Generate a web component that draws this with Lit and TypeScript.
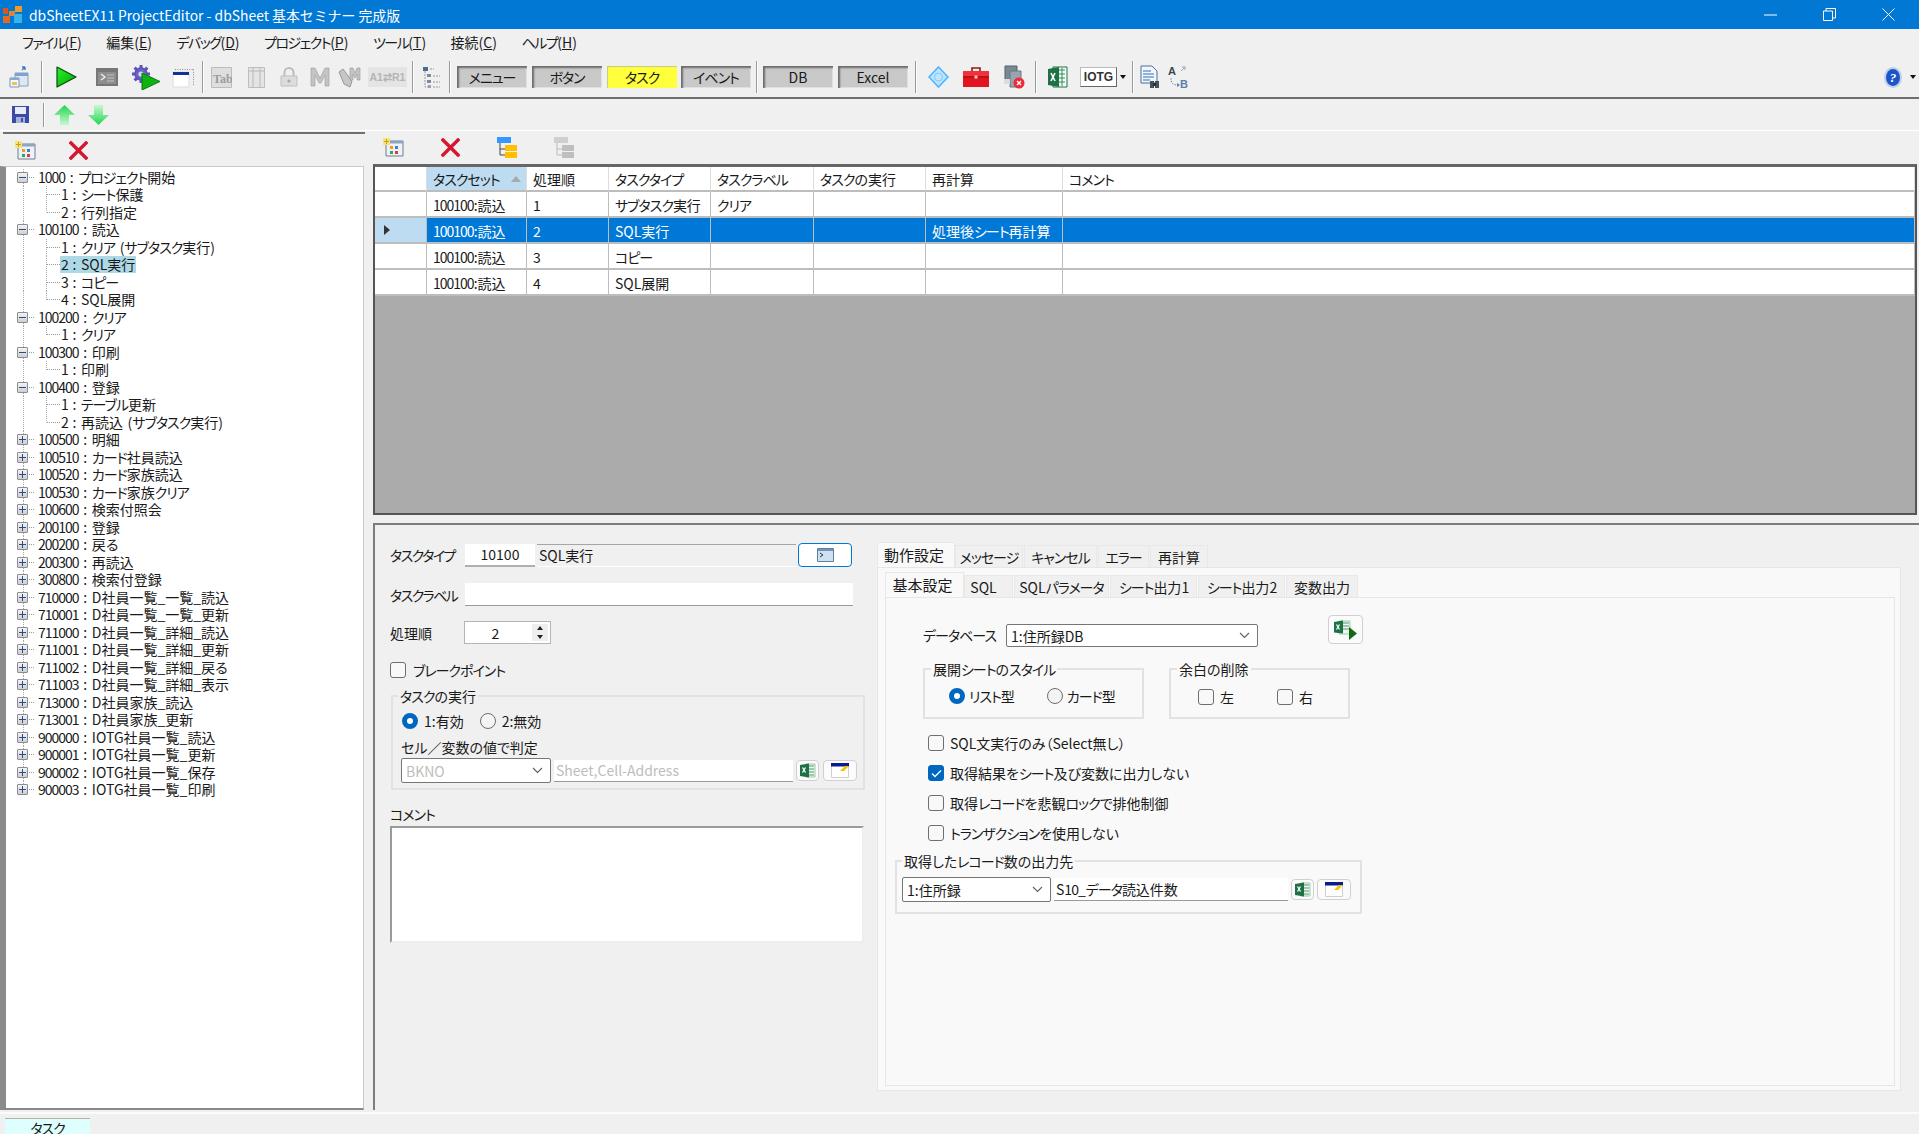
import { LitElement, html, css } from "lit";
import { customElement } from "lit/decorators.js";

const t = (s: string) =>
  s.split(/(\d+|[\u30a0-\u30ff]+)/).map((p, i) =>
    i % 2 ? html`<span class=${/\d/.test(p) ? "d" : "k"}>${p}</span>` : p);

/* ---------- toolbar icons ---------- */
const icons: Record<string, () => any> = {
  deploy: () => html`<svg width="22" height="24" viewBox="0 0 22 24"><path d="M7 8h13v13H7z" fill="#dfe8f2" stroke="#8aa0bc"/><path d="M7 8h13v3H7z" fill="#7fa3cf"/><path d="M2 13h9v9H2z" fill="#f3f6fa" stroke="#7d97b6"/><path d="M2 13h9v2H2z" fill="#88a9d0"/><path d="M4 17h5v3H4z" fill="#e7c65c"/><path d="M14 5l3-3m0 0h-3m3 0v3" fill="none" stroke="#3f78c0" stroke-width="1.4"/></svg>`,
  play: () => html`<svg width="22" height="22" viewBox="0 0 22 22"><defs><linearGradient id="g1" x1="0" y1="0" x2="1" y2="1"><stop offset="0" stop-color="#2bf02b"/><stop offset="1" stop-color="#00a800"/></linearGradient></defs><path d="M2 1l19 10L2 21z" fill="url(#g1)" stroke="#0a4a14" stroke-width="1.2" stroke-linejoin="round"/></svg>`,
  console: () => html`<svg width="22" height="18" viewBox="0 0 22 18"><path d="M0 0h22v18H0z" fill="#777"/><path d="M2 4h18v12H2z" fill="#8e8e8e"/><path d="M5 6l4 3-4 3" fill="none" stroke="#eee" stroke-width="1.4"/><path d="M11 7h7M11 10h7M11 13h7" stroke="#c4c4c4"/></svg>`,
  gearplay: () => html`<svg width="30" height="25" viewBox="0 0 30 25"><circle cx="10" cy="9" r="6.2" fill="#6a63c9" stroke="#3f3a95"/><g stroke="#5a54bb" stroke-width="3"><path d="M10 0v4M10 14v4M1 9h4M15 9h4M3.6 2.6l3 3M13.4 12.4l3 3M16.4 2.6l-3 3M6.6 12.4l-3 3"/></g><circle cx="10" cy="9" r="2.6" fill="#d8d8f5"/><path d="M11 8l18 8.5L11 25z" fill="#0fb30f" stroke="#0a7a12" stroke-linejoin="round"/></svg>`,
  win: () => html`<svg width="22" height="22" viewBox="0 0 22 22"><path d="M3 3.5h18.5M21.500 3.5v16" stroke="#888" stroke-dasharray="1 1.4" fill="none"/><path d="M1 6h16v15H1z" fill="#fff" stroke="#ddd"/><path d="M1 6h16v3H1z" fill="#10329a"/></svg>`,
  tab: () => html`<svg width="21" height="21" viewBox="0 0 21 21"><path d="M.5.5h20v20H.5z" fill="#dedede" stroke="#bcbcbc"/><text x="2" y="16" font-family="Liberation Serif" font-size="12" font-weight="700" fill="#9c9c9c">Tab</text></svg>`,
  cols: () => html`<svg width="17" height="21" viewBox="0 0 17 21"><path d="M.5.5h16v20H.5z" fill="#e4e4e4" stroke="#bdbdbd"/><path d="M5 1v19M12 1v19M1 4h15" stroke="#b8b8b8"/></svg>`,
  lock: () => html`<svg width="18" height="20" viewBox="0 0 18 20"><path d="M4.5 9V5.5a4.5 4.5 0 019 0V9" fill="none" stroke="#bdbdbd" stroke-width="2"/><path d="M1 9h16v10H1z" fill="#dcdcdc" stroke="#c0c0c0"/><circle cx="9" cy="14" r="1.6" fill="#a8a8a8"/></svg>`,
  m: () => html`<svg width="20" height="20" viewBox="0 0 20 20"><path d="M1 19V1h4l5 10 5-10h4v18h-4V8l-4 8h-2L5 8v11z" fill="#c4c4c4" stroke="#9c9c9c" stroke-width=".6"/></svg>`,
  mm: () => html`<svg width="25" height="23" viewBox="0 0 25 23"><path d="M1 6l4-3 9 12-2 6-6-3z" fill="#c6c6c6" stroke="#999"/><path d="M12 14V2h3l2 5 2-5h3v12h-3V8l-2 4-2-4v6z" fill="#c4c4c4" stroke="#999" stroke-width=".6"/></svg>`,
  a1: () => html`<svg width="39" height="20" viewBox="0 0 39 20"><path d="M0 0h39v20H0z" fill="#e4e4e4"/><text x="1.500" y="14" font-family="Liberation Sans" font-size="10.500" font-weight="700" fill="#b4b4b4">A1⇄R1</text></svg>`,
  list: () => html`<svg width="20" height="23" viewBox="0 0 20 23"><path d="M2 1h5v4H2z" fill="#4d6a96"/><path d="M6 8h4v3H6zM6 14h4v3H6z" fill="#7a8aa0"/><path d="M9 3h4M12 10h7M12 16h7M12 21h7M4 5v16h3" stroke="#999" stroke-dasharray="2 1" fill="none"/><path d="M7 19h3v3H7z" fill="#a0a0a0"/></svg>`,
  diamond: () => html`<svg width="21" height="22" viewBox="0 0 21 22"><path d="M10.5 1L20 11l-9.500 10L1 11z" fill="#bfe4ff" stroke="#4db4ff" stroke-width="1.6"/><circle cx="10.500" cy="11" r="4" fill="none" stroke="#7cc8ff"/></svg>`,
  toolbox: () => html`<svg width="26" height="22" viewBox="0 0 26 22"><path d="M9 5V2h8v3" fill="none" stroke="#8c1a1a" stroke-width="1.6"/><path d="M0 5h26v16H0z" fill="#e2141d"/><path d="M0 5h26v5H0z" fill="#f2323a"/><path d="M0 11h26" stroke="#8f1016"/><path d="M11.500 9.500h3v3h-3z" fill="#f8c0c0"/></svg>`,
  docx: () => html`<svg width="22" height="24" viewBox="0 0 22 24"><path d="M2 1h12v14H2z" fill="#7a8794" stroke="#55606c"/><path d="M7 6h11v16H7z" fill="#9aa4b0" stroke="#6c7682"/><path d="M1 14h6v5H1z" fill="#d6dce4"/><circle cx="16" cy="18" r="5.500" fill="#ea2b3a"/><path d="M14 16l4 4m0-4l-4 4" stroke="#fff" stroke-width="1.3"/></svg>`,
  excel: () => html`<svg width="20" height="22" viewBox="0 0 20 22"><path d="M5 1h14v20H5z" fill="#f5fbf6" stroke="#1e7145"/><path d="M11 4h6M11 8h6M11 12h6M11 16h6M14 2v18" stroke="#2f8f5b"/><path d="M0 3l11-2v20L0 19z" fill="#1e7145"/><path d="M3 7l4 8M7 7l-4 8" stroke="#fff" stroke-width="1.6"/></svg>`,
  iotg: () => html`<span class="iotg">IOTG</span>`,
  docbin: () => html`<svg width="20" height="24" viewBox="0 0 20 24"><path d="M1 1h11l5 5v12H1z" fill="#f2f6fc" stroke="#4f6f96"/><path d="M3 6h8M3 9h11M3 12h11M3 15h7" stroke="#2e6ec2"/><path d="M10 16h4v7h-4zM15 16h4v7h-4z" fill="#45505c"/><path d="M13 18h3v3h-3z" fill="#2a3038"/></svg>`,
  ab: () => html`<svg width="20" height="24" viewBox="0 0 20 24"><text x="0" y="10" font-family="Liberation Sans" font-size="11" font-weight="700" fill="#3d4653">A</text><text x="12" y="23" font-family="Liberation Sans" font-size="11" font-weight="700" fill="#5d7fa8">B</text><path d="M3 13c0 5 2 7 6 7" fill="none" stroke="#6f8bb0" stroke-dasharray="1.500 1.200"/><path d="M9 18l3 2-3 2z" fill="#4f7fc0"/><path d="M13 6l4-4m0 0h-3m3 0v3" fill="none" stroke="#8aa6cc"/></svg>`,
  help: () => html`<svg width="18" height="21" viewBox="0 0 18 21"><ellipse cx="9" cy="10.500" rx="9" ry="10.500" fill="#bcd0ec"/><ellipse cx="9" cy="10.500" rx="7" ry="8.500" fill="#1d55c8"/><text x="9" y="15" text-anchor="middle" font-family="Liberation Serif" font-size="13" font-style="italic" font-weight="700" fill="#fff">?</text></svg>`,
  save: () => html`<svg width="17" height="17" viewBox="0 0 17 17"><path d="M0 0h17v17H0z" fill="#3a4aa8"/><path d="M3 1h11v7H3z" fill="#e8ecf8"/><path d="M4 11h9v6H4z" fill="#aab2d6"/><path d="M9 12h2v4H9z" fill="#3a4aa8"/></svg>`,
  up: () => html`<svg width="21" height="20" viewBox="0 0 21 20"><defs><linearGradient id="g2" x1="0" y1="0" x2="0" y2="1"><stop offset="0" stop-color="#1ed84c"/><stop offset="1" stop-color="#c9f7d2"/></linearGradient></defs><path d="M10.500 0L21 10h-6v10H6V10H0z" fill="url(#g2)"/></svg>`,
  down: () => html`<svg width="21" height="20" viewBox="0 0 21 20"><defs><linearGradient id="g3" x1="0" y1="1" x2="0" y2="0"><stop offset="0" stop-color="#1ed84c"/><stop offset="1" stop-color="#c9f7d2"/></linearGradient></defs><path d="M10.500 20L0 10h6V0h9v10h6z" fill="url(#g3)"/></svg>`,
  add: () => html`<svg width="21" height="19" viewBox="0 0 21 19"><path d="M3 3h17v15H3z" fill="#eef1f5" stroke="#6f7f95"/><path d="M3 3h17v2.500H3z" fill="#8ea4c0"/><path d="M7 8h3v3H7z" fill="#e6a020"/><path d="M12 8h3v3h-3z" fill="#3f80d0"/><path d="M7 13h3v3H7z" fill="#2eaa50"/><path d="M12 13h3v3h-3z" fill="#d84040"/><path d="M0 0h7v7H0z" fill="#f8e27a"/><path d="M1 3.500h5M3.500 1v5" stroke="#caa020"/></svg>`,
  del: () => html`<svg width="19" height="19" viewBox="0 0 19 19"><path d="M2 2l15 15M17 2L2 17" stroke="#d4182f" stroke-width="3.400" stroke-linecap="square"/></svg>`,
  flow: () => html`<svg width="20" height="22" viewBox="0 0 20 22"><path d="M0 0h14v6H0z" fill="#3399ff"/><path d="M3 6v12h6M3 12h6" fill="none" stroke="#445"/><path d="M8 8h12v6H8z" fill="#ffc000"/><path d="M8 15h12v6H8z" fill="#ffc000"/></svg>`,
  flowg: () => html`<svg width="20" height="22" viewBox="0 0 20 22"><path d="M0 0h14v6H0z" fill="#cfcfcf"/><path d="M3 6v12h6M3 12h6" fill="none" stroke="#bbb"/><path d="M8 8h12v6H8z" fill="#bfbfbf"/><path d="M8 15h12v6H8z" fill="#bfbfbf"/></svg>`,
  minicon: () => html`<svg width="17" height="14" viewBox="0 0 17 14"><path d="M.5.5h16v13H.5z" fill="#cfe0f0" stroke="#5f7f9f"/><path d="M1 1h15v2H1z" fill="#6e93bd"/><path d="M3 5l3 2-3 2" fill="none" stroke="#333"/></svg>`,
  xls: () => html`<svg width="16" height="15" viewBox="0 0 16 15"><path d="M6 1h9v13H6z" fill="#eef7f0" stroke="#9cc8ac"/><path d="M9 3h5M9 6h5M9 9h5M9 12h5" stroke="#4a9a6a"/><path d="M0 2l9-1.500v14L0 13z" fill="#1e7145"/><path d="M2.500 4.500l3 5m0-5l-3 5" stroke="#fff" stroke-width="1.300"/></svg>`,
  winy: () => html`<svg width="18" height="15" viewBox="0 0 18 15"><path d="M.5 1h17v13.500H.5z" fill="#fff" stroke="#cfcfcf"/><path d="M0 0h18v3.500H0z" fill="#0a1a90"/><path d="M9 8l5-5h4L13 8z" fill="#f4c400"/></svg>`,
  xplay: () => html`<svg width="24" height="20" viewBox="0 0 24 20"><path d="M5 1h11v13H5z" fill="#eef7f0" stroke="#9cc8ac"/><path d="M9 3h6M9 6h6M9 9h6" stroke="#4a9a6a"/><path d="M0 2l9-1.500v13L0 12.500z" fill="#1e7145"/><path d="M2.500 4.500l3 5m0-5l-3 5" stroke="#fff" stroke-width="1.200"/><path d="M15 7l8 6.500-8 6.500z" fill="#126b12"/></svg>`,
};
const ic = (n: string) => icons[n]();

/* ---------- data ---------- */
type TB = { gap: number; kind: string; v?: string; cls?: string };
const bar: TB[] = [
  { gap: 8, kind: "i", v: "deploy" },
  { gap: 11, kind: "s" },
  { gap: 13, kind: "i", v: "play" },
  { gap: 19, kind: "i", v: "console" },
  { gap: 13, kind: "i", v: "gearplay" },
  { gap: 11, kind: "i", v: "win" },
  { gap: 8, kind: "s" },
  { gap: 8, kind: "i", v: "tab" },
  { gap: 16, kind: "i", v: "cols" },
  { gap: 15, kind: "i", v: "lock" },
  { gap: 12, kind: "i", v: "m" },
  { gap: 8, kind: "i", v: "mm" },
  { gap: 5, kind: "i", v: "a1" },
  { gap: 5, kind: "s" },
  { gap: 8, kind: "i", v: "list" },
  { gap: 8, kind: "s" },
  { gap: 7, kind: "b", v: "メニュー" },
  { gap: 5, kind: "b", v: "ボタン" },
  { gap: 5, kind: "b", v: "タスク", cls: "on" },
  { gap: 4, kind: "b", v: "イベント" },
  { gap: 5, kind: "s" },
  { gap: 6, kind: "b", v: "DB" },
  { gap: 5, kind: "b", v: "Excel" },
  { gap: 7, kind: "s" },
  { gap: 12, kind: "i", v: "diamond" },
  { gap: 14, kind: "i", v: "toolbox" },
  { gap: 14, kind: "i", v: "docx" },
  { gap: 10, kind: "s" },
  { gap: 12, kind: "i", v: "excel" },
  { gap: 12, kind: "i", v: "iotg" },
  { gap: 3, kind: "a" },
  { gap: 6, kind: "s" },
  { gap: 7, kind: "i", v: "docbin" },
  { gap: 8, kind: "i", v: "ab" },
];

const menus: [string, string][] = [
  ["ファイル", "F"], ["編集", "E"], ["デバッグ", "D"], ["プロジェクト", "P"],
  ["ツール", "T"], ["接続", "C"], ["ヘルプ", "H"],
];

type Node = { code: string; name: string; kids?: string[] };
const tree: Node[] = [
  { code: "1000", name: "プロジェクト開始", kids: ["1 : シート保護", "2 : 行列指定"] },
  { code: "100100", name: "読込", kids: ["1 : クリア (サブタスク実行)", "2 : SQL実行", "3 : コピー", "4 : SQL展開"] },
  { code: "100200", name: "クリア", kids: ["1 : クリア"] },
  { code: "100300", name: "印刷", kids: ["1 : 印刷"] },
  { code: "100400", name: "登録", kids: ["1 : テーブル更新", "2 : 再読込 (サブタスク実行)"] },
  ...[
    ["100500", "明細"], ["100510", "カード社員読込"], ["100520", "カード家族読込"], ["100530", "カード家族クリア"],
    ["100600", "検索付照会"], ["200100", "登録"], ["200200", "戻る"], ["200300", "再読込"], ["300800", "検索付登録"],
    ["710000", "D社員一覧_一覧_読込"], ["710001", "D社員一覧_一覧_更新"], ["711000", "D社員一覧_詳細_読込"],
    ["711001", "D社員一覧_詳細_更新"], ["711002", "D社員一覧_詳細_戻る"], ["711003", "D社員一覧_詳細_表示"],
    ["713000", "D社員家族_読込"], ["713001", "D社員家族_更新"], ["900000", "IOTG社員一覧_読込"],
    ["900001", "IOTG社員一覧_更新"], ["900002", "IOTG社員一覧_保存"], ["900003", "IOTG社員一覧_印刷"],
  ].map(([code, name]) => ({ code, name })),
];

const heads = ["タスクセット", "処理順", "タスクタイプ", "タスクラベル", "タスクの実行", "再計算", "コメント"];
const rows = [
  ["100100:読込", "1", "サブタスク実行", "クリア", "", "", ""],
  ["100100:読込", "2", "SQL実行", "", "", "処理後シート再計算", ""],
  ["100100:読込", "3", "コピー", "", "", "", ""],
  ["100100:読込", "4", "SQL展開", "", "", "", ""],
];

const chev = html`<svg width="11" height="7" viewBox="0 0 11 7"><path d="M1 1l4.500 4.500L10 1" fill="none" stroke="#606060" stroke-width="1.100"/></svg>`;
const tick = html`<svg width="11" height="9" viewBox="0 0 11 9"><path d="M1 4.500l3 3 6-6" fill="none" stroke="#fff" stroke-width="1.300"/></svg>`;

@customElement("app-root")
export class AppRoot extends LitElement {
  static styles = css`
    :host {
      display: block; width: 1919px; height: 1134px; overflow: hidden; background: #f0f0f0; color: #1a1a1a;
      font: 14px/18px "Noto Sans CJK JP", "Noto Sans", sans-serif; font-feature-settings: "palt";
    }
    * { box-sizing: border-box; }
    svg { display: block; flex: none; }
    .d { letter-spacing: -1px; }
    .k { letter-spacing: -1px; }

    .title { height: 29px; background: #0078d4; color: #fff; display: flex; align-items: center; padding-left: 3px; font-size: 13.900px; font-feature-settings: normal; }
    .title .txt { margin-left: 6px; }
    .ctl { margin-left: auto; display: flex; align-items: center; padding-right: 24px; gap: 46px; }

    .menu { height: 31px; display: flex; align-items: flex-start; padding: 4px 0 0 22px; gap: 24.500px; }
    .menu .k { letter-spacing: -1.500px; }
    .menu u { text-underline-offset: 1px; }

    .tb { height: 39px; border-bottom: 2px solid #6e6e6e; display: flex; align-items: center; padding-bottom: 3px; }
    .sep { width: 1px; height: 32px; background: #9a9a9a; box-shadow: 1px 0 0 #fff; flex: none; }
    .mode { width: 70px; height: 22px; background: #c9c9c9; display: flex; align-items: center; justify-content: center; box-shadow: inset 2px 2px 2px #6b6b6b, inset -1px -1px 0 #e0e0e0; flex: none; }
    .mode.on { background: #ffff3c; box-shadow: inset 1px 1px 1px #c7c78a; }
    .iotg { display: flex; width: 37px; height: 20px; background: #fff; border: 1px solid #bbb; border-right-color: #666; border-bottom-color: #666; align-items: center; justify-content: center; font: 700 12px "Liberation Sans", sans-serif; color: #333; }
    .arrow { width: 0; height: 0; border: 3.500px solid transparent; border-top: 4px solid #111; border-bottom: 0; flex: none; }
    .helpbox { margin-left: auto; display: flex; align-items: center; gap: 8px; padding-right: 3px; }

    .tb2 { height: 32px; border-bottom: 1px solid #fff; display: flex; align-items: center; padding-left: 12px; }
    .tb2 .sep { height: 24px; margin: 0 10px 0 14px; }
    .tb2 .dn { margin-left: 13px; }

    .main { height: 981px; display: flex; }
    .left { width: 373px; display: flex; flex-direction: column; padding-bottom: 2px; }
    .ptb { height: 34px; display: flex; align-items: center; border-top: 2px solid #707070; margin: 1px 8px 0 3px; padding-left: 12px; gap: 33px; flex: none; }
    .treebox { flex: 1; margin-right: 9px; background: #fff; border: 1px solid #c8c8c8; border-left: 6px solid #8b8b8b; border-bottom: 2px solid #888; padding-top: 1.500px; }
    .tr { height: 17.500px; display: flex; align-items: center; line-height: 17px; white-space: nowrap; padding-left: 11px; word-spacing: 1.500px;
      background: repeating-linear-gradient(#a8a8a8 0 1px, transparent 1px 2px) 17px 0 / 1px 100% no-repeat; }
    .tr.end { background-size: 1px 50%; }
    .exp { width: 11px; height: 11px; border: 1px solid #8c8c8c; border-radius: 1px; background: linear-gradient(#f4f4f4, #cfcfcf); display: flex; align-items: center; justify-content: center; position: relative; flex: none; }
    .exp::before { content: ""; width: 7px; height: 1px; background: #2a4a8c; }
    .exp.plus::after { content: ""; position: absolute; left: 4px; top: 1px; width: 1px; height: 7px; background: #2a4a8c; }
    .dash { width: 5px; border-top: 1px dotted #999; margin: 0 3px 0 1px; flex: none; }
    .tr.kid { padding-left: 41px; background-image: repeating-linear-gradient(#a8a8a8 0 1px, transparent 1px 2px), repeating-linear-gradient(#a8a8a8 0 1px, transparent 1px 2px); background-position: 17px 0, 40px 0; background-size: 1px 100%, 1px 100%; background-repeat: no-repeat; }
    .tr.kid.last { background-size: 1px 100%, 1px 50%; }
    .tr.kid .dash { width: 13px; margin: 0; }
    .lbl { padding: 0 1px; height: 17px; }
    .lbl.sel { background: #add8e6; }

    .right { flex: 1; display: flex; flex-direction: column; min-width: 0; padding-bottom: 2px; }
    .rtb { height: 33px; display: flex; align-items: center; padding-left: 10px; flex: none; }
    .rtb .a, .rtb .b { margin-left: 37px; }
    .gridbox { height: 351px; flex: none; margin-right: 2px; border: 2px solid #555; border-top: 3px solid #666; background: #ababab; }
    .grid { display: grid; grid-template-columns: 52px 100px 82px 102px 103px 112px 137px 1fr; }
    .c { background: #fff; padding: 1px 0 0 6px; display: flex; align-items: center; border-right: 1px solid #bdbdbd; border-bottom: 2px solid #bdbdbd; height: 26px; white-space: nowrap; }
    .c.h { height: 25px; padding-top: 0; border-right: 1px solid #dcdcdc; }
    .c.h.act { background: #bddcf2; justify-content: space-between; padding-right: 5px; }
    .c.s { background: #0078d7; color: #fff; }
    .c.rh { padding: 0 0 0 9px; }
    .c.rh.s { background: #bddcf2; }
    .rt { width: 0; height: 0; border: 5px solid transparent; border-left: 6px solid #333; border-right: 0; }
    .st { width: 0; height: 0; border: 5.500px solid transparent; border-bottom: 6px solid #a8a8a8; border-top: 0; }

    .bottom { flex: 1; margin-top: 8px; border-top: 2px solid #7c7c7c; border-left: 2px solid #7c7c7c; display: flex; min-height: 0; }
    .form { width: 502px; padding: 18px 0 0 15px; flex: none; }
    .row { display: flex; align-items: center; }
    .f-l { width: 75px; flex: none; white-space: nowrap; }
    .f-l .k { letter-spacing: -1.600px; }
    .field { height: 23px; background: #fff; border-bottom: 1px solid #9a9a9a; display: flex; align-items: center; padding: 0 2px; white-space: nowrap; flex: none; }
    .ro { background: #f0f0f0; border-top: 1px solid #a5a5a5; border-bottom: 1px solid #fff; }
    .btn { display: flex; align-items: center; justify-content: center; background: #fbfbfb; border: 1px solid #d0d0d0; border-radius: 4px; flex: none; }
    .btn.pri { width: 54px; height: 24px; margin-left: 2px; background: #fff; border: 1.500px solid #0078d4; }
    .spin { width: 87px; height: 23px; margin-left: -1px; background: #fff; border: 1px solid #b4b4b4; display: flex; align-items: center; justify-content: flex-end; }
    .spin .v { flex: 1; text-align: center; padding-right: 6px; }
    .spin .ud { width: 16px; height: 17px; margin-right: 2px; background: #eee; display: flex; flex-direction: column; align-items: center; justify-content: space-around; }
    .uu { border: 3.500px solid transparent; border-bottom: 4px solid #222; border-top: 0; width: 0; height: 0; }
    .dd { border: 3.500px solid transparent; border-top: 4px solid #222; border-bottom: 0; width: 0; height: 0; }

    .cb { width: 16px; height: 16px; border: 1px solid #6e6e6e; border-radius: 3px; background: #f8f8f8; flex: none; display: flex; align-items: center; justify-content: center; }
    .cb.on { background: #0067c0; border-color: #0067c0; }
    .rd { width: 16px; height: 16px; border: 1px solid #6e6e6e; border-radius: 50%; background: #f4f4f4; flex: none; }
    .rd.on { border: 5px solid #0067c0; background: #fff; }

    fieldset { margin: 0; min-width: 0; border: 2px solid #e2e2e2; flex: none; }
    legend { padding: 0 2px; line-height: 18px; height: 18px; white-space: nowrap; }
    .combo { background: #fff; border: 1px solid #767676; border-radius: 2px; display: flex; align-items: center; justify-content: space-between; padding: 0 7px 0 4px; flex: none; white-space: nowrap; }
    .mute { color: #bdbdbd; }

    .fs1 { width: 474px; height: 103px; margin: 8px 0 0 1px; padding: 0 7px 0 8px; }
    .fs1 legend { margin-left: -3px; }
    .comment { margin: 15px 0 3px; }
    .ta { width: 474px; height: 117px; background: #fff; border: 2px solid #9a9a9a; border-right-color: #eee; border-bottom-color: #eee; }

    .tabs { flex: none; width: 1024px; margin-top: 17px; display: flex; flex-direction: column; height: 549px; }
    .strip { display: flex; align-items: flex-end; flex: none; }
    .tabx { height: 22px; background: #f0f0f0; border: 1px solid #e8e8e8; border-bottom: 0; display: flex; align-items: center; justify-content: center; flex: none; margin-right: 1px; white-space: nowrap; }
    .tabx.on { height: 25px; background: #f9f9f9; margin-right: 0; font-size: 15px; padding-right: 4px; }
    .panel { flex: 1; background: #f9f9f9; border: 1px solid #e6e6e6; padding: 4px 5px 4px 7px; display: flex; flex-direction: column; min-height: 0; }
    .panel2 { flex: 1; border: 1px solid #e6e6e6; }
    .inner { padding: 17px 0 0 37px; }
    .dbrow { display: flex; align-items: flex-start; }
    .dbrow .l { width: 83px; margin-top: 9px; line-height: 23px; flex: none; }
    .dbrow .combo { width: 252px; height: 23px; margin-top: 9px; }
    .dbrow .btn { width: 35px; height: 29px; margin-left: 70px; }
    .grp { display: flex; gap: 25px; margin-top: 13px; }
    .g1 { width: 221px; height: 59px; padding: 0 0 0 24px; }
    .g2 { width: 181px; height: 59px; padding: 0 0 0 27px; }
    .g1 legend { margin-left: -18px; }
    .g2 legend { margin-left: -21px; }
    .fr { display: flex; align-items: center; height: 24px; }
    .lab { margin-left: 6px; white-space: nowrap; }
    .checks { margin: 9px 0 0 5px; }
    .ck { height: 30px; display: flex; align-items: center; }
    .g3 { width: 467px; height: 62px; margin: 4px 0 0 -33px; padding: 0 0 0 5px; }

    .status { height: 22px; border-top: 2px solid #fbfbfb; padding: 4px 0 0 5px; }
    .stab { width: 85px; height: 16px; background: #dfffff; border-top: 1px solid #b5b59c; text-align: center; line-height: 18px; }

    .num { width: 70px; justify-content: center; border-bottom: 2px solid #b0b0b0; }
    .namef { width: 259px; margin-left: 2px; }
    .wide { width: 388px; }
    .r2 { margin-top: 16px; }
    .r3 { margin-top: 15px; }
    .r4 { margin-top: 17px; }
    .r4 .lab { margin-left: 7px; }
    .fr .r-a { margin-right: 16px; }
    .fs1 .fr { height: 26px; margin: 3px 0 0 1px; }
    .hint { margin: 3px 0 0 0; height: 21px; line-height: 20px; }
    .fs1 .c1 { width: 150px; height: 25px; }
    .addr { width: 239px; height: 22px; margin-left: 3px; }
    .bx { width: 23px; height: 21px; margin-left: 3px; }
    .by { width: 34px; height: 21px; margin-left: 4px; }
    .g1 .lab { margin-left: 4px; }
    .rg { margin-left: 32px; }
    .cg { margin-left: 43px; }
    .g3 .c1 { width: 149px; height: 25px; }
    .addr2 { width: 234px; height: 23px; margin-left: 3px; }
    .g3 .by { margin-left: 3px; }
    .g3 .hintrow2 { margin-top: 7px; }
    .g1 .fr { margin-top: 6px; }
    .g2 .fr { margin-top: 7px; }
    .sqltab { padding-right: 10px; }
  `;

  private toolbar() {
    return bar.map((b) => {
      const m = `margin-left:${b.gap}px`;
      if (b.kind === "s") return html`<div class="sep" style=${m}></div>`;
      if (b.kind === "a") return html`<div class="arrow" style=${m}></div>`;
      if (b.kind === "b") return html`<div class="mode ${b.cls ?? ""}" style=${m}>${t(b.v!)}</div>`;
      return html`<div style=${m}>${ic(b.v!)}</div>`;
    });
  }

  private treeRows() {
    const out: any[] = [];
    tree.forEach((n, ni) => {
      const last = ni === tree.length - 1;
      out.push(html`<div class="tr ${last ? "end" : ""}">
        <span class="exp ${n.kids ? "" : "plus"}"></span><span class="dash"></span>
        <span class="lbl">${t(n.code)} : ${t(n.name)}</span></div>`);
      (n.kids ?? []).forEach((k, i) => {
        const isLast = i === n.kids!.length - 1;
        out.push(html`<div class="tr kid ${isLast ? "last" : ""}"><span class="dash"></span>
          <span class="lbl ${k === "2 : SQL実行" ? "sel" : ""}">${t(k)}</span></div>`);
      });
    });
    return out;
  }

  private grid() {
    return html`<div class="grid">
      <div class="c h"></div>
      ${heads.map((h, i) => html`<div class="c h ${i === 0 ? "act" : ""}"><span>${t(h)}</span>${i === 0 ? html`<span class="st"></span>` : ""}</div>`)}
      ${rows.map((r, ri) => html`
        <div class="c rh ${ri === 1 ? "s" : ""}">${ri === 1 ? html`<span class="rt"></span>` : ""}</div>
        ${r.map((v) => html`<div class="c ${ri === 1 ? "s" : ""}"><span>${t(v)}</span></div>`)}`)}
    </div>`;
  }

  private form() {
    return html`<div class="form">
      <div class="row">
        <div class="f-l">${t("タスクタイプ")}</div>
        <div class="field num">10100</div>
        <div class="field ro namef">SQL実行</div>
        <div class="btn pri">${ic("minicon")}</div>
      </div>
      <div class="row r2">
        <div class="f-l">${t("タスクラベル")}</div>
        <div class="field wide"></div>
      </div>
      <div class="row r3">
        <div class="f-l">処理順</div>
        <div class="spin"><span class="v">2</span><div class="ud"><span class="uu"></span><span class="dd"></span></div></div>
      </div>
      <div class="row r4"><span class="cb"></span><span class="lab">${t("ブレークポイント")}</span></div>
      <fieldset class="fs1">
        <legend>${t("タスクの実行")}</legend>
        <div class="fr">
          <span class="rd on"></span><span class="lab r-a">1:有効</span>
          <span class="rd"></span><span class="lab">2:無効</span>
        </div>
        <div class="hint">セル／変数の値で判定</div>
        <div class="row">
          <div class="combo mute c1">BKNO ${chev}</div>
          <div class="field mute addr">Sheet,Cell-Address</div>
          <div class="btn bx">${ic("xls")}</div>
          <div class="btn by">${ic("winy")}</div>
        </div>
      </fieldset>
      <div class="comment">${t("コメント")}</div>
      <div class="ta"></div>
    </div>`;
  }

  private tabs() {
    const outer: [string, number][] = [["動作設定", 78], ["メッセージ", 68], ["キャンセル", 73], ["エラー", 51], ["再計算", 58]];
    const inner: [string, number][] = [["基本設定", 79], ["SQL", 49], ["SQLパラメータ", 95], ["シート出力1", 87], ["シート出力2", 87], ["変数出力", 72]];
    const strip = (a: [string, number][]) => html`<div class="strip">
      ${a.map(([s, w], i) => html`<div class="tabx ${i === 0 ? "on" : ""} ${s === "SQL" ? "sqltab" : ""}" style="width:${w}px"><span>${t(s)}</span></div>`)}</div>`;
    return html`<div class="tabs">
      ${strip(outer)}
      <div class="panel">
        ${strip(inner)}
        <div class="panel2">
          <div class="inner">
            <div class="dbrow">
              <div class="l">${t("データベース")}</div>
              <div class="combo">1:住所録DB ${chev}</div>
              <div class="btn">${ic("xplay")}</div>
            </div>
            <div class="grp">
              <fieldset class="g1"><legend>${t("展開シートのスタイル")}</legend>
                <div class="fr"><span class="rd on"></span><span class="lab">${t("リスト型")}</span><span class="rd rg"></span><span class="lab">${t("カード型")}</span></div>
              </fieldset>
              <fieldset class="g2"><legend>余白の削除</legend>
                <div class="fr"><span class="cb"></span><span class="lab">左</span><span class="cb cg"></span><span class="lab">右</span></div>
              </fieldset>
            </div>
            <div class="checks">
              <div class="ck"><span class="cb"></span><span class="lab">SQL文実行のみ（Select無し）</span></div>
              <div class="ck"><span class="cb on">${tick}</span><span class="lab">${t("取得結果をシート及び変数に出力しない")}</span></div>
              <div class="ck"><span class="cb"></span><span class="lab">${t("取得レコードを悲観ロックで排他制御")}</span></div>
              <div class="ck"><span class="cb"></span><span class="lab">${t("トランザクションを使用しない")}</span></div>
              <fieldset class="g3"><legend>${t("取得したレコード数の出力先")}</legend>
                <div class="row hintrow2">
                  <div class="combo c1">1:住所録 ${chev}</div>
                  <div class="field addr2">${t("S10_データ読込件数")}</div>
                  <div class="btn bx">${ic("xls")}</div>
                  <div class="btn by">${ic("winy")}</div>
                </div>
              </fieldset>
            </div>
          </div>
        </div>
      </div>
    </div>`;
  }

  render() {
    return html`
      <div class="title">
        <svg width="20" height="18" viewBox="0 0 20 18"><path d="M0 2h5v6H0z" fill="#d9561c"/><path d="M6 5h6v5H6z" fill="#e8822a"/><path d="M12 0h7v6h-7z" fill="#f09a2e"/><path d="M0 10h7v7H0z" fill="#e06a20"/><path d="M11 8h8v9h-8z" fill="#39b3e8"/></svg>
        <span class="txt">dbSheetEX11 ProjectEditor - dbSheet 基本セミナー 完成版</span>
        <div class="ctl">
          <svg width="13" height="2" viewBox="0 0 13 2"><path d="M0 1h13" stroke="#fff"/></svg>
          <svg width="13" height="13" viewBox="0 0 13 13"><path d="M.5 3h9v9.500h-9zM3 3V.5h9.500V10H9.500" fill="none" stroke="#fff"/></svg>
          <svg width="13" height="13" viewBox="0 0 13 13"><path d="M.5.5l12 12m0-12l-12 12" stroke="#fff"/></svg>
        </div>
      </div>
      <div class="menu">${menus.map(([a, b]) => html`<span>${t(a)}(<u>${b}</u>)</span>`)}</div>
      <div class="tb">
        ${this.toolbar()}
        <div class="helpbox">${ic("help")}<span class="arrow"></span></div>
      </div>
      <div class="tb2">
        ${ic("save")}<div class="sep"></div>${ic("up")}<div class="dn">${ic("down")}</div>
      </div>
      <div class="main">
        <div class="left">
          <div class="ptb">${ic("add")}${ic("del")}</div>
          <div class="treebox">${this.treeRows()}</div>
        </div>
        <div class="right">
          <div class="rtb">${ic("add")}<div class="a">${ic("del")}</div><div class="b">${ic("flow")}</div><div class="b">${ic("flowg")}</div></div>
          <div class="gridbox">${this.grid()}</div>
          <div class="bottom">${this.form()}${this.tabs()}</div>
        </div>
      </div>
      <div class="status"><div class="stab">${t("タスク")}</div></div>
    `;
  }
}
